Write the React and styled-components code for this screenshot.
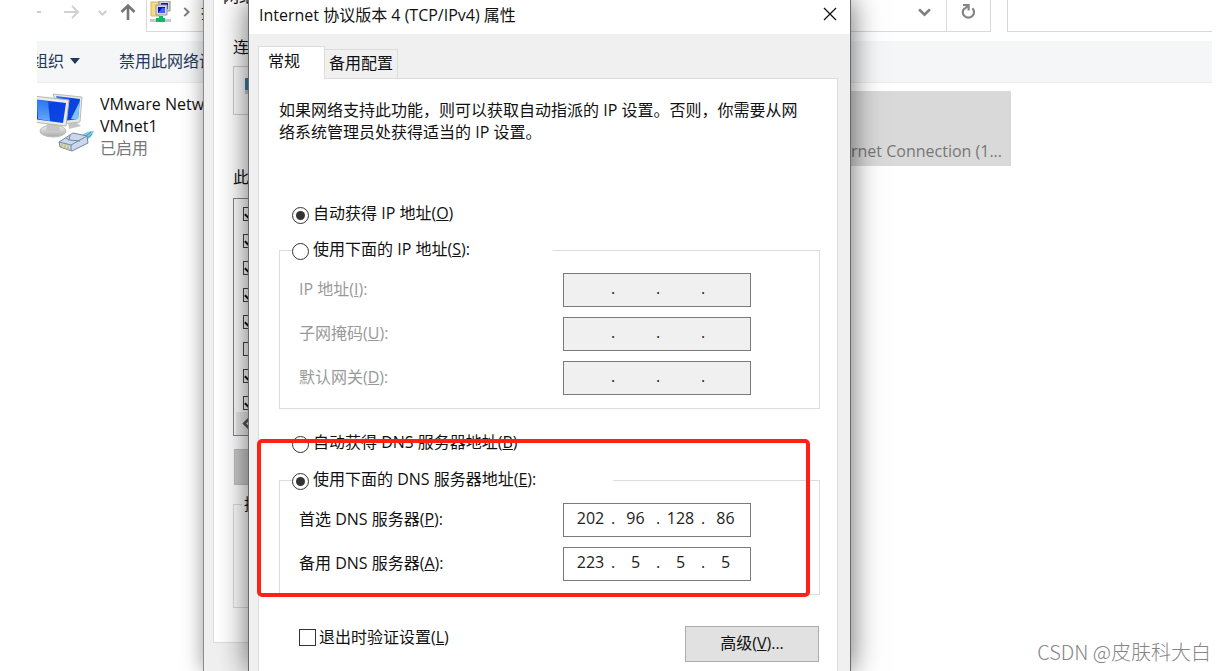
import React from 'react';
import styled, { createGlobalStyle } from 'styled-components';

const GlobalStyle = createGlobalStyle`
  * {
    box-sizing: border-box;
  }

  body {
    margin: 0;
    background: #fff;
    color: #111;
    font-family: "Open Sans", "Noto Sans CJK SC", sans-serif;
    font-size: 16px;
    line-height: 22px;
  }

  input, button {
    font: inherit;
    color: inherit;
  }
`;

const BackArrow = () => (
  <svg width="15" height="16" viewBox="0 0 15 16" fill="none" stroke="#ccc" strokeWidth="2">
    <path d="M14 8H1M7 2L1 8l6 6" />
  </svg>
);

const ForwardArrow = () => (
  <svg width="18" height="16" viewBox="0 0 18 16" fill="none" stroke="#d2d2d2" strokeWidth="2">
    <path d="M1 8h14M9 2l6 6-6 6" />
  </svg>
);

const UpArrow = () => (
  <svg width="16" height="18" viewBox="0 0 16 18" fill="none" stroke="#757575" strokeWidth="2.600">
    <path d="M8 17V3M1.500 9L8 2.500 14.500 9" />
  </svg>
);

const Chevron = ({ size = 12, color = '#7d7d7d', turn = 0 }) => (
  <svg width={size} height={size} viewBox="0 0 12 12" fill="none" stroke={color} strokeWidth="2.4">
    <path d="M1 4l5 5 5-5" transform={`rotate(${turn} 6 6)`} />
  </svg>
);

const RefreshIcon = () => (
  <svg width="15" height="17" viewBox="0 0 15 17" fill="none" stroke="#858585" strokeWidth="2.200">
    <path d="M3.400 5.200A5.600 5.600 0 1 0 11.400 5.200" />
    <path d="M2 2h5.600v5.600M7.400 2.200L3.400 6" />
  </svg>
);

const CloseIcon = () => (
  <svg width="14" height="14" viewBox="0 0 14 14" fill="none" stroke="#111" strokeWidth="1.3">
    <path d="M1 1l12 12M13 1L1 13" />
  </svg>
);

const NetworkFolderIcon = () => (
  <svg width="21" height="22" viewBox="0 0 21 22">
    <path d="M1 1h8v14H1z" fill="#f5dc84" stroke="#d9b95a" />
    <path d="M9 0h11v10H9z" fill="#d4d4ce" stroke="#8e8e8e" />
    <path d="M11 2h7v6h-7z" fill="#1515c8" />
    <path d="M6 4h11v10H6z" fill="#d8d8d8" stroke="#999" />
    <path d="M8 6h7v6H8z" fill="#0b0bc4" />
    <path d="M8 12l4-5h3v5z" fill="#3d62ec" />
    <path d="M0 18h21v3H0z" fill="#c3cbd0" />
    <path d="M9 15h4v2h2v4H6v-4h3z" fill="#12b866" />
  </svg>
);

const ComputersIcon = () => (
  <svg width="62" height="62" viewBox="0 0 62 62">
    <defs>
      <linearGradient id="screen" x1="0" y1="0" x2="1" y2="1">
        <stop offset="0" stopColor="#2f86f5" />
        <stop offset=".4" stopColor="#0b3fe0" />
        <stop offset="1" stopColor="#0a49e6" />
      </linearGradient>
      <linearGradient id="glow" x1="0" y1="0" x2="0" y2="1">
        <stop offset="0" stopColor="#2d7cf4" />
        <stop offset="1" stopColor="#7cc4ff" />
      </linearGradient>
      <linearGradient id="base" x1="0" y1="0" x2="0" y2="1">
        <stop offset="0" stopColor="#f4f4f4" />
        <stop offset="1" stopColor="#a9a9a9" />
      </linearGradient>
    </defs>
    <path d="M35 29h8l5 4-12 3z" fill="#c4c4c4" />
    <path d="M20 1l29 3-2 25-18 2z" fill="#e6e6e2" stroke="#bcbcb8" />
    <path d="M23 3l24 3-2 20-14 2z" fill="url(#screen)" />
    <path d="M38 26l9-18-2 18z" fill="#7cc4ff" />
    <ellipse cx="20" cy="38" rx="13" ry="6" fill="url(#base)" stroke="#bbb" />
    <path d="M14 31h12l1 7H13z" fill="#c5c5c5" />
    <path d="M0 3l36 4-3 26-33-4z" fill="#ebebe8" stroke="#b6b6b2" />
    <path d="M0 6l33 4-3 20-30-4z" fill="url(#screen)" />
    <path d="M4 7l11 1.500 2 19.500-12-2z" fill="url(#glow)" opacity=".8" />
    <path d="M46 45c5-5 8-7 15-7l-3 6-9 6z" fill="#7fcbe4" />
    <path d="M48 47l10-8M51 48l8-7" stroke="#2fa0c4" />
    <path d="M26 49l14-9 14 3 1 7-16 8-12-4z" fill="#cbd7ea" stroke="#7485a5" />
    <path d="M26 49l12 3 16-9M38 52v6M37 42l-1 5 11 1M33 45l3 2" fill="none" stroke="#7485a5" />
    <path d="M29 50.500v4M32 51.500v4M35 52.500v4" stroke="#cfc45c" strokeWidth="1.6" />
  </svg>
);

const Explorer = () => (
  <ExplorerFrame>
    <ExplorerBody>
      <NavBar>
        <NavButtons>
          <PlainButton aria-label="Back"><BackArrow /></PlainButton>
          <PlainButton aria-label="Forward"><ForwardArrow /></PlainButton>
          <PlainButton aria-label="Recent"><Chevron size={9} color="#ccc" /></PlainButton>
          <PlainButton aria-label="Up"><UpArrow /></PlainButton>
        </NavButtons>
        <AddressBar>
          <NetworkFolderIcon />
          <Chevron size={10} turn={-90} />
          <Crumb>控制面板</Crumb>
          <PlainButton aria-label="History"><Chevron size={13} /></PlainButton>
          <RefreshButton aria-label="Refresh"><RefreshIcon /></RefreshButton>
        </AddressBar>
        <SearchBox type="text" aria-label="Search" />
      </NavBar>
      <CommandBar>
        <PlainButton>组织<Caret /></PlainButton>
        <PlainButton>禁用此网络设备</PlainButton>
      </CommandBar>
      <Connections>
        <Connection>
          <ComputersIcon />
          <ConnectionText>
            VMware Network<br />VMnet1<br /><Muted>已启用</Muted>
          </ConnectionText>
        </Connection>
        <Connection $selected>
          <Muted>Ethernet Connection (1...</Muted>
        </Connection>
      </Connections>
    </ExplorerBody>
  </ExplorerFrame>
);

const services = [true, true, true, true, true, false, true, true];

const AdapterWindow = () => (
  <BackWindow>
    <BackPanel>
      <BackTab>网络</BackTab>
      <div>连接时使用:</div>
      <AdapterBox><AdapterGlyph /></AdapterBox>
      <div>此连接使用下列项目(O):</div>
      <ServiceList>
        <ServiceRows>
          {services.map((on, i) => (
            <ServiceRow key={i}>
              <SmallCheck type="checkbox" defaultChecked={on} aria-label={`Item ${i + 1}`} />
            </ServiceRow>
          ))}
        </ServiceRows>
        <ScrollBar>
          <Chevron size={13} color="#555" turn={90} />
        </ScrollBar>
      </ServiceList>
      <InstallButton aria-label="Install" />
      <Description>
        <legend>描述</legend>
      </Description>
    </BackPanel>
  </BackWindow>
);

const IpField = ({ id, label, mnemonic, value = ['', '', '', ''], disabled }) => (
  <FieldRow $disabled={disabled}>
    <FieldLabel htmlFor={id}>{label}(<u>{mnemonic}</u>):</FieldLabel>
    <IpBox $disabled={disabled}>
      {value.map((part, i) => (
        <React.Fragment key={i}>
          {i > 0 && <Dot>.</Dot>}
          <Octet
            id={i === 0 ? id : undefined}
            aria-label={i === 0 ? undefined : `${label} ${i + 1}`}
            type="text"
            maxLength={3}
            defaultValue={part}
            disabled={disabled}
          />
        </React.Fragment>
      ))}
    </IpBox>
  </FieldRow>
);

const RadioOption = ({ name, checked, label, mnemonic, end = '' }) => (
  <Option>
    <Radio type="radio" name={name} defaultChecked={checked} />
    <span>{label}(<u>{mnemonic}</u>){end}</span>
  </Option>
);

const Ipv4Dialog = () => (
  <Dialog role="dialog" aria-labelledby="dialog-title">
    <TitleBar>
      <Title id="dialog-title">Internet 协议版本 4 (TCP/IPv4) 属性</Title>
      <PlainButton aria-label="Close"><CloseIcon /></PlainButton>
    </TitleBar>
    <DialogBody>
      <Tabs>
        <Tab $active>常规</Tab>
        <Tab>备用配置</Tab>
      </Tabs>
      <Panel>
        <Intro>
          如果网络支持此功能，则可以获取自动指派的 IP 设置。否则，你需要从网<br />
          络系统管理员处获得适当的 IP 设置。
        </Intro>
        <SoloOption $top={60}>
          <RadioOption name="ip" checked label="自动获得 IP 地址" mnemonic="O" />
        </SoloOption>
        <Group $top={14}>
          <GroupLegend $width={261}>
            <RadioOption name="ip" label="使用下面的 IP 地址" mnemonic="S" end=":" />
          </GroupLegend>
          <IpField id="address" label="IP 地址" mnemonic="I" disabled />
          <IpField id="mask" label="子网掩码" mnemonic="U" disabled />
          <IpField id="gateway" label="默认网关" mnemonic="D" disabled />
        </Group>
        <SoloOption $top={23}>
          <RadioOption name="dns" label="自动获得 DNS 服务器地址" mnemonic="B" />
        </SoloOption>
        <Group $top={15}>
          <GroupLegend $width={321}>
            <RadioOption name="dns" checked label="使用下面的 DNS 服务器地址" mnemonic="E" end=":" />
          </GroupLegend>
          <IpField id="dns1" label="首选 DNS 服务器" mnemonic="P" value={['202', '96', '128', '86']} />
          <IpField id="dns2" label="备用 DNS 服务器" mnemonic="A" value={['223', '5', '5', '5']} />
        </Group>
        <Footer>
          <CheckLabel>
            <Check type="checkbox" />
            <span>退出时验证设置(<u>L</u>)</span>
          </CheckLabel>
          <AdvancedButton type="button">高级(<u>V</u>)...</AdvancedButton>
        </Footer>
      </Panel>
    </DialogBody>
    <Highlight />
  </Dialog>
);

const App = () => {
  return (
    <Desktop>
      <GlobalStyle />
      <Explorer />
      <AdapterWindow />
      <Ipv4Dialog />
      <Watermark>CSDN @皮肤科大白</Watermark>
    </Desktop>
  );
}

const Desktop = styled.div`
  position: relative;
  min-height: 100vh;
  overflow: hidden;
`;

const PlainButton = styled.button`
  display: flex;
  align-items: center;
  padding: 0;
  border: 0;
  background: none;
  white-space: nowrap;
`;

/* explorer */

const ExplorerFrame = styled.div`
  margin: 0 12px 0 37px;
  overflow: hidden;
`;

const ExplorerBody = styled.div`
  margin-left: -10px;
`;

const NavBar = styled.div`
  display: flex;
  height: 41px;
  padding-bottom: 9px;
`;

const NavButtons = styled.div`
  display: flex;
  align-items: center;
  gap: 17px;
  width: 119px;
  padding-bottom: 8px;

  button:nth-child(2) {
    margin-left: 4px;
  }

  button:nth-child(4) {
    margin-left: -4px;
  }
`;

const AddressBar = styled.div`
  display: flex;
  flex: 1;
  align-items: center;
  gap: 10px;
  padding: 0 0 8px 3px;
  border: solid #d9d9d9;
  border-width: 0 1px 1px;
`;

const Crumb = styled.span`
  flex: 1;
`;

const RefreshButton = styled(PlainButton)`
  justify-content: center;
  align-self: stretch;
  width: 44px;
  margin: 0 0 -8px 5px;
  padding-bottom: 8px;
  border-left: 1px solid #d9d9d9;
`;

const SearchBox = styled.input`
  width: 205px;
  margin-left: 16px;
  border: solid #d9d9d9;
  border-width: 0 0 1px 1px;
  outline: none;
`;

const CommandBar = styled.div`
  display: flex;
  gap: 39px;
  height: 42px;
  padding: 0 0 2px 5px;
  background: #f5f6f8;
  border-bottom: 1px solid #ebebeb;
  color: #1e395b;
`;

const Caret = styled.span`
  margin-left: 6px;
  border: 5px solid transparent;
  border-top: 6px solid #1e395b;
  border-bottom: 0;
`;

const Connections = styled.div`
  display: grid;
  grid-template-columns: repeat(3, 320px);
  gap: 9px;
  padding: 8px 0 0 6px;
`;

const Connection = styled.div`
  display: flex;
  justify-content: ${props => props.$selected ? 'flex-end' : 'flex-start'};
  align-items: ${props => props.$selected ? 'flex-end' : 'flex-start'};
  grid-column: ${props => props.$selected ? 3 : 1};
  gap: 5px;
  height: 75px;
  padding: 2px 9px 4px 0;
  background: ${props => props.$selected ? '#d9d9d9' : 'none'};
`;

const ConnectionText = styled.div`
  white-space: nowrap;
`;

const Muted = styled.span`
  color: #777;
`;

/* adapter properties */

const BackWindow = styled.div`
  position: absolute;
  top: -12px;
  bottom: 0;
  left: 203px;
  width: 560px;
  padding: 0 9px;
  background: #f0f0f0;
  border-left: 1px solid #8a8a8a;
  box-shadow: 0 0 20px rgba(0, 0, 0, 0.4);
`;

const BackPanel = styled.div`
  padding: 0 19px 34px;
  background: #fff;
  border: 1px solid #dcdcdc;
  border-top: 0;
`;

const BackTab = styled.div`
  margin: 0 0 32px -10px;
  line-height: 16px;
`;

const AdapterBox = styled.div`
  height: 49px;
  margin: 8px 0 51px;
  padding: 11px;
  border: 1px solid #d0d0d0;
`;

const AdapterGlyph = styled.div`
  width: 18px;
  height: 16px;
  background: #3f7fa5;
  border-bottom: 4px solid #ccc;
`;

const ServiceList = styled.div`
  display: flex;
  flex-direction: column;
  height: 238px;
  margin-top: 10px;
  border: 1px solid #828790;
`;

const ServiceRows = styled.div`
  flex: 1;
  min-height: 0;
  padding: 1px 9px 0;
  overflow: hidden;
`;

const ServiceRow = styled.div`
  display: flex;
  align-items: center;
  height: 27px;
`;

const SmallCheck = styled.input`
  appearance: none;
  width: 14px;
  height: 14px;
  margin: 0;
  background: #fff;
  border: 1px solid #444;

  &:checked::before {
    content: '';
    display: block;
    width: 9px;
    height: 5px;
    margin: 2px 1px;
    border: solid #111;
    border-width: 0 0 2px 2px;
    transform: rotate(-45deg);
  }
`;

const ScrollBar = styled.div`
  display: flex;
  align-items: center;
  height: 23px;
  margin-left: 2px;
  padding-left: 5px;
  background: #ececec;
`;

const InstallButton = styled.button`
  display: block;
  width: 150px;
  height: 36px;
  margin: 13px 0 8px 1px;
  background: #ccc;
  border: 1px solid #bfbfbf;
`;

const Description = styled.fieldset`
  height: 115px;
  margin: 0;
  padding: 0 8px;
  border: 1px solid #dcdcdc;

  legend {
    padding: 0 2px;
  }
`;

/* ipv4 dialog */

const Dialog = styled.div`
  position: absolute;
  top: 0;
  bottom: 0;
  left: 248px;
  display: flex;
  flex-direction: column;
  width: 603px;
  background: #f0f0f0;
  border: solid #6a6a6a;
  border-width: 0 1px;
  box-shadow: 0 0 28px rgba(0, 0, 0, 0.6);
`;

const TitleBar = styled.div`
  display: flex;
  justify-content: space-between;
  height: 34px;
  padding: 0 13px 6px 10px;
  background: #fff;
`;

const Title = styled.div`
  line-height: 30px;
`;

const DialogBody = styled.div`
  display: flex;
  flex: 1;
  flex-direction: column;
  padding: 12px 12px 0 9px;
`;

const Tabs = styled.div`
  display: flex;
  align-items: flex-end;
  height: 32px;
`;

const Tab = styled.button`
  z-index: ${props => props.$active ? 1 : 0};
  width: ${props => props.$active ? '67px' : '73px'};
  height: ${props => props.$active ? '33px' : '29px'};
  margin-bottom: ${props => props.$active ? '-1px' : '0'};
  padding: ${props => props.$active ? '0 0 4px 9px' : '0 0 2px'};
  text-align: ${props => props.$active ? 'left' : 'center'};
  white-space: nowrap;
  background: ${props => props.$active ? '#fff' : '#f0f0f0'};
  border: 1px solid #dcdcdc;
  border-bottom: 0;
  border-left-width: ${props => props.$active ? '1px' : '0'};
`;

const Panel = styled.div`
  flex: 1;
  padding: 20px 17px 0 20px;
  background: #fff;
  border: 1px solid #dcdcdc;
  border-bottom: 0;
`;

const Intro = styled.p`
  margin: 0;
  white-space: nowrap;
`;

const SoloOption = styled.div`
  margin-top: ${props => props.$top}px;
  padding-left: 13px;
`;

const Option = styled.label`
  display: flex;
  align-items: center;
  gap: 4px;
  height: 22px;

  span {
    padding-bottom: 3px;
  }
`;

const Radio = styled.input`
  appearance: none;
  display: grid;
  place-items: center;
  width: 17px;
  height: 17px;
  margin: 2px 0 0;
  background: #fff;
  border: 1px solid #333;
  border-radius: 50%;

  &:checked::before {
    content: '';
    width: 9px;
    height: 9px;
    background: #333;
    border-radius: 50%;
  }
`;

const Group = styled.fieldset`
  display: flex;
  flex-direction: column;
  gap: 10px;
  margin: ${props => props.$top}px 0 0;
  padding: 12px 68px 13px 19px;
  border: 1px solid #dcdcdc;
`;

const GroupLegend = styled.legend`
  width: ${props => props.$width}px;
  margin-left: -7px;
  padding: 0;
`;

const FieldRow = styled.div`
  display: flex;
  align-items: center;
  justify-content: space-between;
  color: ${props => props.$disabled ? '#999' : '#111'};
`;

const FieldLabel = styled.label`
  padding-bottom: 2px;
`;

const IpBox = styled.div`
  display: flex;
  align-items: center;
  width: 188px;
  height: 34px;
  padding: 0 4px 4px 6px;
  color: #222;
  background: ${props => props.$disabled ? '#f0f0f0' : '#fff'};
  border: 1px solid #7a7a7a;
`;

const Octet = styled.input`
  flex: 1;
  min-width: 0;
  padding: 0;
  text-align: center;
  background: none;
  border: 0;
  outline: none;
`;

const Dot = styled.span`
  width: 4px;
`;

const Footer = styled.div`
  display: flex;
  align-items: center;
  justify-content: space-between;
  margin-top: 31px;
  padding: 0 1px 0 20px;
`;

const CheckLabel = styled.label`
  display: flex;
  align-items: center;
  gap: 3px;
  padding-bottom: 14px;
`;

const Check = styled.input`
  appearance: none;
  width: 17px;
  height: 17px;
  margin: 0;
  background: #fff;
  border: 1px solid #333;

  &:checked {
    background: #333;
  }
`;

const AdvancedButton = styled.button`
  width: 134px;
  height: 36px;
  padding: 0 0 2px;
  background: #e1e1e1;
  border: 1px solid #adadad;
`;

const Highlight = styled.div`
  position: absolute;
  top: 439px;
  left: 8px;
  width: 553px;
  height: 158px;
  border: 4px solid #ff2116;
  border-radius: 5px;
  pointer-events: none;
`;

const Watermark = styled.div`
  position: absolute;
  right: 13px;
  bottom: 6px;
  color: #858585;
  font-family: "Noto Sans CJK SC", sans-serif;
  font-size: 20px;
  font-weight: 300;
  line-height: 26px;
`;

export default App;
